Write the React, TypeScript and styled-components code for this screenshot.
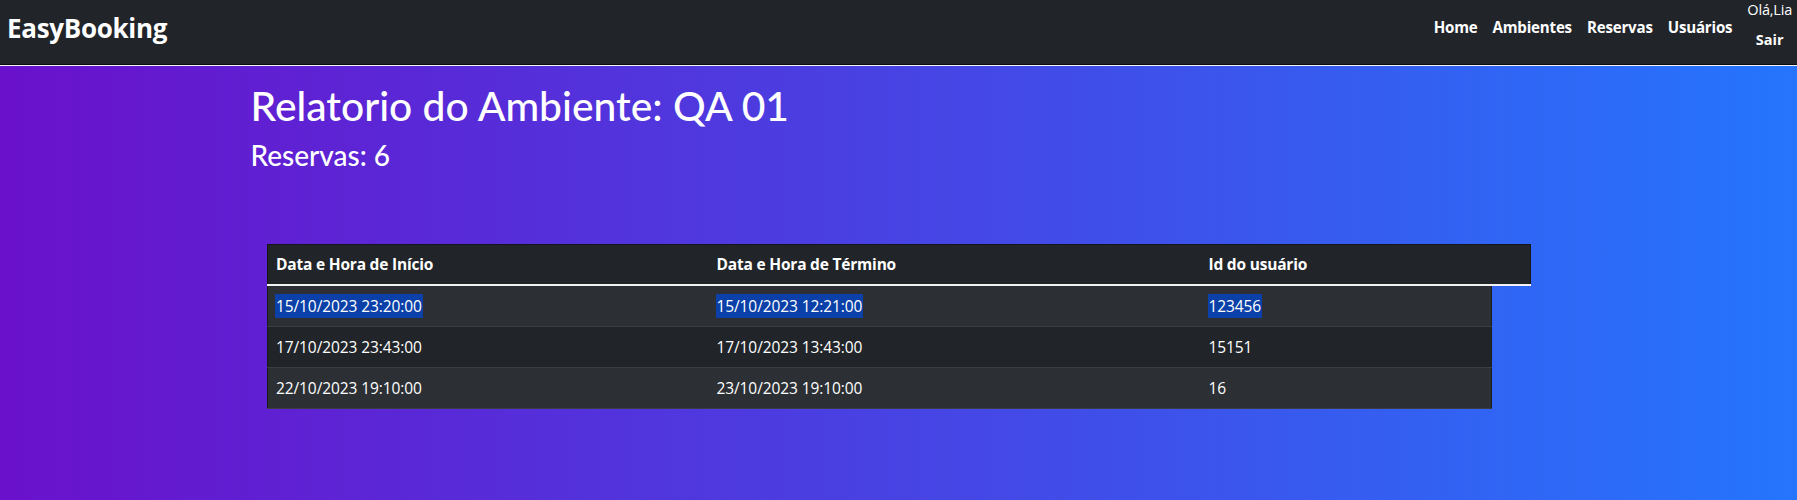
import React from "react";
import styled, { createGlobalStyle } from "styled-components";

const Global = createGlobalStyle`
  html, body { margin: 0; padding: 0; height: 100%; }
  body {
    font-family: "Open Sans", "Noto Sans", "Liberation Sans", sans-serif;
    color: #fff;
    background: linear-gradient(to right, #6a11cb 0%, #2575fc 100%);
    min-height: 100vh;
  }
  #root { min-height: 100vh; }
`;

const Page = styled.div`
  min-height: 100vh;
  background: linear-gradient(to right, #6a11cb 0%, #2575fc 100%);
`;

const NavBar = styled.header`
  height: 64px;
  background: #212529;
  border-bottom: 1px solid #0b0c0d;
  box-shadow: 0 1px 0 #f4f4f4;
  display: flex;
  align-items: center;
  justify-content: space-between;
  padding: 0 5px 0 7px;
  overflow: hidden;
`;

const Brand = styled.a`
  font-size: 26px;
  font-weight: 700;
  color: #fff;
  text-decoration: none;
  letter-spacing: -0.3px;
  margin-top: -8px;
`;

const NavRight = styled.nav`
  display: flex;
  align-items: center;
  gap: 15px;
`;

const NavLinks = styled.ul`
  display: flex;
  gap: 15px;
  list-style: none;
  margin: -10px 0 0;
  padding: 0;
`;

const NavLink = styled.a`
  font-size: 15.1px;
  font-weight: 700;
  color: #fff;
  text-decoration: none;
  letter-spacing: -0.2px;
`;

const UserBox = styled.div`
  display: flex;
  flex-direction: column;
  align-items: center;
  margin-top: -15px;
  line-height: 22px;
`;

const Greeting = styled.span`
  font-size: 14.5px;
  font-weight: 400;
  letter-spacing: -0.2px;
`;

const Logout = styled.a`
  font-size: 14.5px;
  font-weight: 700;
  color: #fff;
  text-decoration: none;
  margin-top: 8px;
`;

const Container = styled.main`
  max-width: 1320px;
  margin: 0 auto;
  padding: 0 12px;
  box-sizing: border-box;
`;

const Title = styled.h1`
  margin: 17px 0 0;
  font-family: "Lato", "Open Sans", sans-serif;
  font-size: 40.8px;
  font-weight: 500;
  line-height: 48px;
`;

const Subtitle = styled.h3`
  margin: 8px 0 0;
  font-family: "Lato", "Open Sans", sans-serif;
  font-size: 28px;
  font-weight: 500;
  line-height: 34px;
`;

const TableWrap = styled.div`
  margin: 72px 16px 0 16.5px;
`;

const Table = styled.table`
  width: 100%;
  table-layout: fixed;
  border-collapse: collapse;
  font-size: 15.5px;
`;

const HeadRow = styled.tr`
  background: #212529;
  border: 1px solid #141618;
  border-bottom: 2px solid #f2f2f2;
`;

const Th = styled.th`
  text-align: left;
  font-weight: 700;
  padding: 8px;
  line-height: 23px;
  letter-spacing: -0.2px;
`;

const Td = styled.td<{ $striped: boolean }>`
  padding: 8px;
  line-height: 24px;
  border-bottom: 1px solid #3a3e42;
  background: ${(p) => (p.$striped ? "#2c3034" : "#212529")};
  letter-spacing: -0.1px;
  &:first-child { border-left: 1px solid #16181a; }
`;

const EndTd = styled.td`
  padding: 0;
  background: transparent;
  border-left: 1px solid #1d1f1c;
`;

const Selected = styled.span`
  display: inline-block;
  line-height: 24px;
  background: #0a40a8;
  color: #fff;
  padding: 0 1px;
  margin-left: -1px;
`;

const rows = [
  { start: "15/10/2023 23:20:00", end: "15/10/2023 12:21:00", user: "123456" },
  { start: "17/10/2023 23:43:00", end: "17/10/2023 13:43:00", user: "15151" },
  { start: "22/10/2023 19:10:00", end: "23/10/2023 19:10:00", user: "16" },
];

export default function App() {
  return (
    <Page>
      <Global />
      <NavBar>
        <Brand href="#">EasyBooking</Brand>
        <NavRight>
          <NavLinks>
            <li><NavLink href="#">Home</NavLink></li>
            <li><NavLink href="#">Ambientes</NavLink></li>
            <li><NavLink href="#">Reservas</NavLink></li>
            <li><NavLink href="#">Usuários</NavLink></li>
          </NavLinks>
          <UserBox>
            <Greeting>Olá,Lia</Greeting>
            <Logout href="#">Sair</Logout>
          </UserBox>
        </NavRight>
      </NavBar>
      <Container>
        <Title>Relatorio do Ambiente: QA 01</Title>
        <Subtitle>Reservas: 6</Subtitle>
        <TableWrap>
          <Table>
            <colgroup>
              <col style={{ width: 441 }} />
              <col style={{ width: 492 }} />
              <col style={{ width: 291 }} />
              <col style={{ width: 39 }} />
            </colgroup>
            <thead>
              <HeadRow>
                <Th>Data e Hora de Início</Th>
                <Th>Data e Hora de Término</Th>
                <Th>Id do usuário</Th>
                <Th />
              </HeadRow>
            </thead>
            <tbody>
              {rows.map((r, i) => {
                const s = i % 2 === 0;
                return (
                  <tr key={i}>
                    <Td $striped={s}>{i === 0 ? <Selected>{r.start}</Selected> : r.start}</Td>
                    <Td $striped={s}>{i === 0 ? <Selected>{r.end}</Selected> : r.end}</Td>
                    <Td $striped={s}>{i === 0 ? <Selected>{r.user}</Selected> : r.user}</Td>
                    <EndTd />
                  </tr>
                );
              })}
            </tbody>
          </Table>
        </TableWrap>
      </Container>
    </Page>
  );
}
